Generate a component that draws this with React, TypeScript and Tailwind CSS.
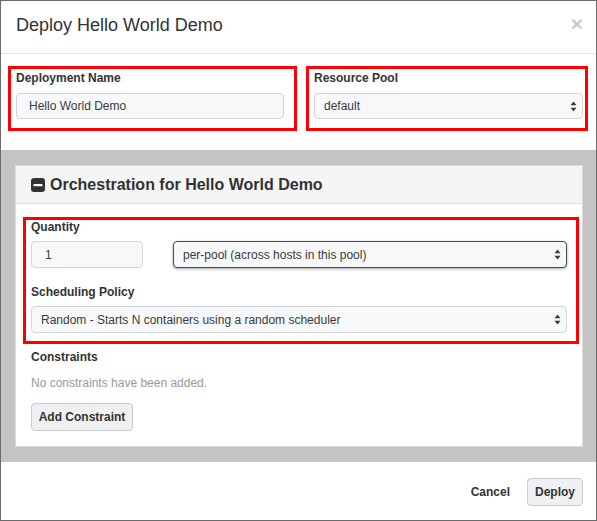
import React from 'react';

const SelectArrows: React.FC = () => (
  <svg width="7" height="11" viewBox="0 0 7 11" className="shrink-0">
    <path d="M3.5 0.5 L6.5 4.3 L0.5 4.3 Z" fill="#3a3a3a" />
    <path d="M3.5 10.5 L6.5 6.7 L0.5 6.7 Z" fill="#3a3a3a" />
  </svg>
);

const MinusSquare: React.FC = () => (
  <svg width="14" height="14" viewBox="0 0 14 14" className="shrink-0">
    <rect x="0" y="0" width="14" height="14" rx="3" fill="#333" />
    <rect x="2.5" y="6" width="9" height="2.2" fill="#fff" />
  </svg>
);

interface FakeSelectProps {
  value: string;
  focused?: boolean;
  className?: string;
}

const FakeSelect: React.FC<FakeSelectProps> = ({ value, focused, className }) => (
  <div
    className={`flex items-center justify-between pl-[9px] pr-[5px] rounded-[4px] border bg-[#f7f8fa] text-[12px] text-[#3a3a3a] ${
      focused ? 'border-[#4a4a4a] shadow-[0_1px_3px_rgba(0,0,0,0.35)]' : 'border-[#d3d5d8]'
    } ${className ?? ''}`}
  >
    <span>{value}</span>
    <SelectArrows />
  </div>
);

const App: React.FC = () => {
  return (
    <div className="w-[597px] h-[521px] border border-[#6b6b6b] bg-white flex flex-col font-['Liberation_Sans',Arial,sans-serif] text-[#333]">
      {/* header */}
      <div className="h-[53px] shrink-0 border-b border-[#e5e5e5] flex justify-between pl-[15px] pr-[13px] pt-[14px]">
        <h4 className="text-[18px] leading-[20px]">Deploy Hello World Demo</h4>
        <span className="text-[21px] leading-[20px] font-bold text-[#c9c9c9] mt-[-1px]">×</span>
      </div>

      {/* top fields */}
      <div className="flex pt-[12px] pb-[19px] pl-[7px] pr-[8px] gap-[9px]">
        <div className="w-[289px] h-[65px] border-[3px] border-[#f00] pl-[5px] pr-[10px] pt-[1px]">
          <label className="block text-[12px] leading-[16px] font-bold">Deployment Name</label>
          <div className="mt-[7px] h-[26px] rounded-[4px] border border-[#d3d5d8] bg-[#f7f8fa] pl-3 flex items-center text-[12px] text-[#3a3a3a]">
            Hello World Demo
          </div>
        </div>
        <div className="w-[282px] h-[65px] border-[3px] border-[#f00] pl-[5px] pr-[2px] pt-[1px]">
          <label className="block text-[12px] leading-[16px] font-bold">Resource Pool</label>
          <FakeSelect value="default" className="mt-[7px] h-[26px]" />
        </div>
      </div>

      {/* gray band */}
      <div className="h-[312px] shrink-0 bg-[#c4c4c4] pt-[15px] pl-[14px] pr-[13px]">
        <div className="h-[282px] border border-[#dcdcdc] bg-white flex flex-col">
          <div className="h-[38px] shrink-0 bg-[#f5f5f5] border-b border-[#dcdcdc] flex items-center gap-[5px] pl-[15px]">
            <MinusSquare />
            <span className="text-[16px] font-bold">Orchestration for Hello World Demo</span>
          </div>
          <div className="pt-[13px] pl-[7px] pr-[3px]">
            <div className="border-[3px] border-[#f00] pl-[5px] pr-[9px]">
              <label className="block text-[12px] leading-[14px] font-bold">Quantity</label>
              <div className="mt-[7px] flex gap-[30px]">
                <div className="w-[112px] h-[27px] rounded-[4px] border border-[#d3d5d8] bg-[#f7f8fa] pl-[13px] flex items-center text-[12px] text-[#3a3a3a]">
                  1
                </div>
                <FakeSelect value="per-pool (across hosts in this pool)" focused className="flex-1 h-[27px]" />
              </div>
              <label className="block mt-[17px] text-[12px] leading-[14px] font-bold">Scheduling Policy</label>
              <FakeSelect
                value="Random - Starts N containers using a random scheduler"
                className="mt-[7px] h-[27px] mb-[8px]"
              />
            </div>
            <div className="pl-[8px]">
              <label className="block mt-[6px] text-[12px] leading-[14px] font-bold">Constraints</label>
              <p className="mt-[12px] text-[12px] leading-[14px] text-[#9a9a9a]">No constraints have been added.</p>
              <button className="mt-[13px] w-[102px] h-[28px] rounded-[4px] border border-[#c9cbce] bg-[#eef0f2] text-[12px] font-bold text-[#333] flex items-center justify-center">
                Add Constraint
              </button>
            </div>
          </div>
        </div>
      </div>

      {/* footer */}
      <div className="flex-1 flex items-center justify-end pr-[13px] pt-[2px]">
        <button className="text-[12px] font-bold text-[#333] mr-[17px]">Cancel</button>
        <button className="w-[56px] h-[28px] rounded-[4px] border border-[#c9cbce] bg-[#eef0f2] text-[12px] font-bold text-[#333] flex items-center justify-center">
          Deploy
        </button>
      </div>
    </div>
  );
};

export default App;
